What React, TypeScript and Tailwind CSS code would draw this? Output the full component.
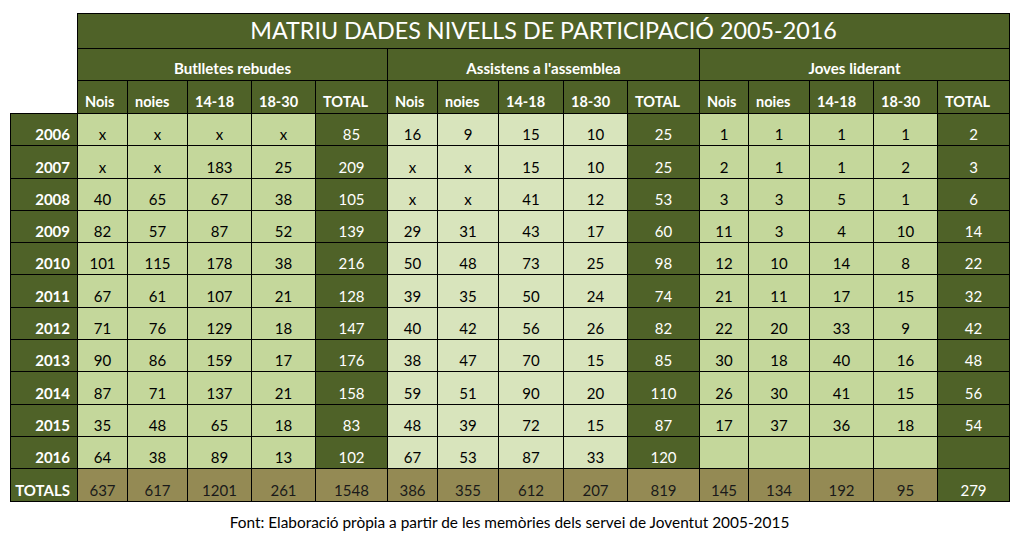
import React from "react";

type Row = { year: string; b: string[]; a: string[]; j: string[] };

const rows: Row[] = [
  { year: "2006", b: ["x", "x", "x", "x", "85"], a: ["16", "9", "15", "10", "25"], j: ["1", "1", "1", "1", "2"] },
  { year: "2007", b: ["x", "x", "183", "25", "209"], a: ["x", "x", "15", "10", "25"], j: ["2", "1", "1", "2", "3"] },
  { year: "2008", b: ["40", "65", "67", "38", "105"], a: ["x", "x", "41", "12", "53"], j: ["3", "3", "5", "1", "6"] },
  { year: "2009", b: ["82", "57", "87", "52", "139"], a: ["29", "31", "43", "17", "60"], j: ["11", "3", "4", "10", "14"] },
  { year: "2010", b: ["101", "115", "178", "38", "216"], a: ["50", "48", "73", "25", "98"], j: ["12", "10", "14", "8", "22"] },
  { year: "2011", b: ["67", "61", "107", "21", "128"], a: ["39", "35", "50", "24", "74"], j: ["21", "11", "17", "15", "32"] },
  { year: "2012", b: ["71", "76", "129", "18", "147"], a: ["40", "42", "56", "26", "82"], j: ["22", "20", "33", "9", "42"] },
  { year: "2013", b: ["90", "86", "159", "17", "176"], a: ["38", "47", "70", "15", "85"], j: ["30", "18", "40", "16", "48"] },
  { year: "2014", b: ["87", "71", "137", "21", "158"], a: ["59", "51", "90", "20", "110"], j: ["26", "30", "41", "15", "56"] },
  { year: "2015", b: ["35", "48", "65", "18", "83"], a: ["48", "39", "72", "15", "87"], j: ["17", "37", "36", "18", "54"] },
  { year: "2016", b: ["64", "38", "89", "13", "102"], a: ["67", "53", "87", "33", "120"], j: ["", "", "", "", ""] },
];

const totals: Row = {
  year: "TOTALS",
  b: ["637", "617", "1201", "261", "1548"],
  a: ["386", "355", "612", "207", "819"],
  j: ["145", "134", "192", "95", "279"],
};

const colWidths = [67, 50, 60, 64, 64, 72, 50, 61, 65, 64, 72, 49, 61, 64, 64, 72];
const subHeads = ["Nois", "noies", "14-18", "18-30", "TOTAL"];

function dataCellClass(group: "b" | "a" | "j", i: number): string {
  if (i === 4) return "bg-[#4f6228] text-white";
  if (group === "a") return "bg-[#d8e4bc] text-black";
  return "bg-[#c4d79b] text-black";
}

function totalCellClass(group: "b" | "a" | "j", i: number): string {
  if (group === "j" && i === 4) return "bg-[#4f6228] text-white";
  return "bg-[#948a54] text-[#1a1a1a]";
}

export default function App() {
  return (
    <div className="min-h-[536px] w-[1022px] bg-white font-['Lato',sans-serif] text-black">
      <div className="pl-[10px] pt-[13px]">
        <table className="table-fixed border-collapse">
          <colgroup>
            {colWidths.map((w, i) => (
              <col key={i} style={{ width: w }} />
            ))}
          </colgroup>
          <thead>
            <tr>
              <td rowSpan={3} className="border-none bg-white"></td>
              <td
                colSpan={15}
                className="h-[35px] border border-black bg-[#4f6228] pb-[4px] text-center align-bottom text-[23.3px] leading-[28px] text-white"
              >
                MATRIU DADES NIVELLS DE PARTICIPACIÓ 2005-2016
              </td>
            </tr>
            <tr>
              {["Butlletes rebudes", "Assistens a l'assemblea", "Joves liderant"].map((g) => (
                <td
                  key={g}
                  colSpan={5}
                  className="h-[32px] border border-black bg-[#4f6228] pb-[3px] text-center align-bottom text-[15.1px] leading-[18px] font-bold text-white"
                >
                  {g}
                </td>
              ))}
            </tr>
            <tr>
              {[0, 1, 2].map((g) =>
                subHeads.map((h) => (
                  <td
                    key={`${g}-${h}`}
                    className="h-[33px] border border-black bg-[#4f6228] pb-[2px] pl-[7px] text-left align-bottom text-[14.5px] leading-[18px] font-bold text-white"
                  >
                    {h}
                  </td>
                ))
              )}
            </tr>
          </thead>
          <tbody>
            {rows.map((r) => (
              <tr key={r.year}>
                <td className="h-[32.3px] border border-black bg-[#4f6228] pb-[2px] pr-[7px] text-right align-bottom text-[15px] leading-[18px] font-bold text-white">
                  {r.year}
                </td>
                {(["b", "a", "j"] as const).map((g) =>
                  r[g].map((v, i) => (
                    <td
                      key={`${g}${i}`}
                      className={`h-[32.3px] border border-black pb-[2px] text-center align-bottom text-[15px] leading-[18px] ${dataCellClass(g, i)}`}
                    >
                      {v}
                    </td>
                  ))
                )}
              </tr>
            ))}
            <tr>
              <td className="h-[32.3px] border border-black bg-[#4f6228] pb-[2px] pr-[7px] text-right align-bottom text-[15px] leading-[18px] font-bold text-white">
                {totals.year}
              </td>
              {(["b", "a", "j"] as const).map((g) =>
                totals[g].map((v, i) => (
                  <td
                    key={`t${g}${i}`}
                    className={`h-[32.3px] border border-black pb-[2px] text-center align-bottom text-[15px] leading-[18px] ${totalCellClass(g, i)}`}
                  >
                    {v}
                  </td>
                ))
              )}
            </tr>
          </tbody>
        </table>
        <div className="w-[999px] pt-[11px] text-center text-[15.4px] leading-[19px] text-black">
          Font: Elaboració pròpia a partir de les memòries dels servei de Joventut 2005-2015
        </div>
      </div>
    </div>
  );
}
